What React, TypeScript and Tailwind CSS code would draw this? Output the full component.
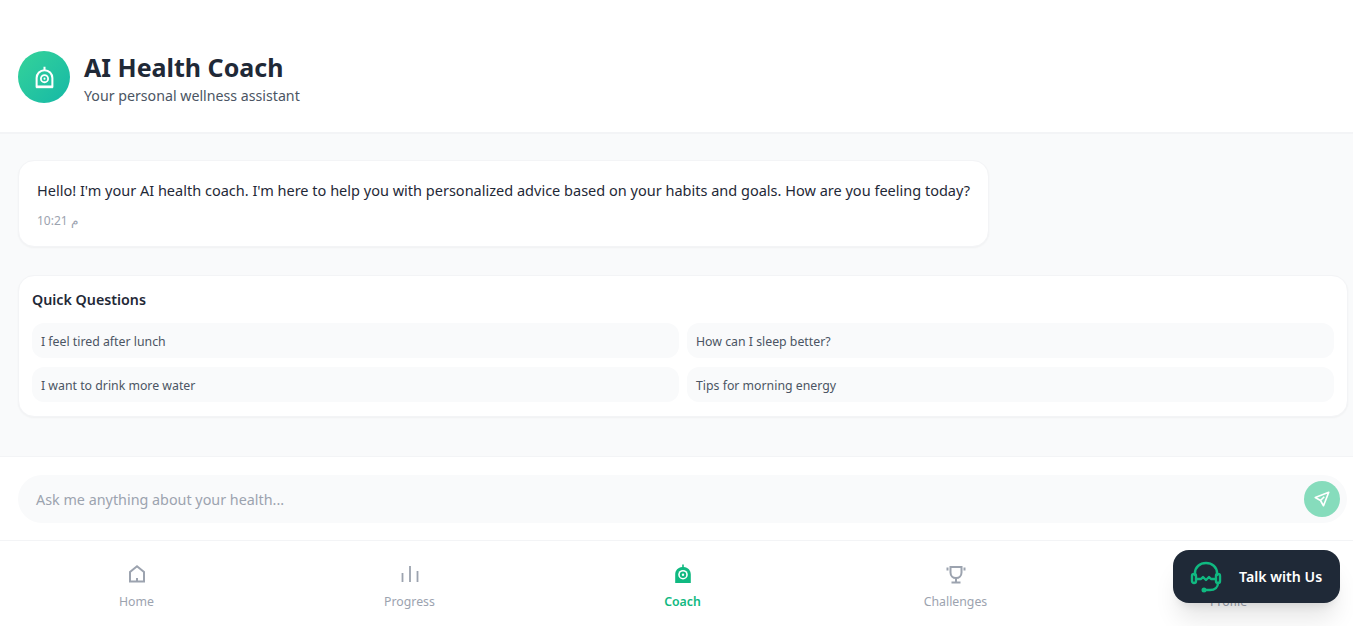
const questions = [
  "I feel tired after lunch",
  "How can I sleep better?",
  "I want to drink more water",
  "Tips for morning energy",
];

function CoachIcon() {
  return (
    <svg viewBox="0 0 24 24" fill="none" stroke="white" className="h-[27px] w-[27px]">
      <path strokeWidth="1.800" d="M12 2.500v3M5 20v-7.500c0-4 3-7 7-7s7 3 7 7V20z" />
      <path strokeWidth="2" d="M4.500 20.500h15" />
      <circle cx="12" cy="13" r="3.200" strokeWidth="1.600" />
      <circle cx="12" cy="13" r="0.900" fill="white" stroke="none" />
    </svg>
  );
}

function CoachIconSolid() {
  return (
    <svg viewBox="0 0 24 24" className="h-6 w-6">
      <path fill="#10b981" d="M11.200 2.500h1.600v2.600c4.200.4 7 3.300 7 7.500v8.400H4.200v-8.400c0-4.200 2.800-7.100 7-7.500z" />
      <circle cx="12" cy="12.700" r="4.800" fill="white" />
      <circle cx="12" cy="12.700" r="3.200" fill="#10b981" />
      <circle cx="12" cy="12.700" r="1.200" fill="white" />
    </svg>
  );
}

function HomeIcon() {
  return (
    <svg viewBox="0 0 24 24" fill="none" stroke="currentColor" strokeWidth="2" className="h-6 w-6">
      <path d="M5 19.500V10l7-5.700L19 10v9.500z" />
      <path d="M12 19.500V16" />
    </svg>
  );
}

function BarsIcon() {
  return (
    <svg viewBox="0 0 24 24" fill="none" stroke="currentColor" strokeWidth="1.800" className="h-6 w-6">
      <path d="M4.500 20v-9M12 20V4M19.500 20V9" />
    </svg>
  );
}

function TrophyIcon() {
  return (
    <svg viewBox="0 0 24 24" fill="none" stroke="currentColor" strokeWidth="2" className="h-6 w-6">
      <path d="M6.500 5h11v5.500c0 3.200-2.300 5.500-5.500 5.500s-5.500-2.300-5.500-5.500z" />
      <path d="M12 16v4M7.500 20.500h9M3.500 5.500v3M20.500 5.500v3" />
    </svg>
  );
}

function Headset() {
  return (
    <svg viewBox="0 0 32 32" fill="none" stroke="#10b981" strokeWidth="2.400" strokeLinecap="round" strokeLinejoin="round" className="h-8 w-8">
      <path d="M5 14v-2C5 6 10 2 16 2s11 4 11 10v2" />
      <rect x="2" y="13" width="4" height="9" rx="2" />
      <rect x="26" y="13" width="4" height="9" rx="2" />
      <path d="M6 18h5l2-2 3 3 3-3 2 2h5" />
      <path d="M28 22c0 4-3 7-8 7h-5" />
      <circle cx="14" cy="29" r="1.300" fill="#10b981" />
    </svg>
  );
}

function NavItem({ label, icon, active }: { label: string; icon: React.ReactNode; active?: boolean }) {
  return (
    <button className={`flex flex-1 flex-col items-center gap-[6px] pt-[6px] ${active ? "font-semibold text-[#10b981]" : "text-[#9ca3af]"}`}>
      {icon}
      <span className="text-[12.300px] leading-[20px]">{label}</span>
    </button>
  );
}

export default function App() {
  return (
    <div className="h-screen overflow-hidden bg-white font-['Noto_Sans',sans-serif]">
      <div className="relative flex h-[626px] w-[1365px] flex-col">
        <header className="flex h-[134px] items-center gap-3.5 border-b-2 border-[#f3f4f6] bg-white px-[18px] pt-[22px]">
          <div className="flex h-[52px] w-[52px] items-center justify-center rounded-full bg-gradient-to-br from-[#34d399] to-[#14b8a6]">
            <CoachIcon />
          </div>
          <div className="pt-[1px]">
            <h1 className="text-[25px] leading-[36px] font-bold text-[#1f2937]">AI Health Coach</h1>
            <p className="mt-[1px] text-[14.200px] leading-[20px] text-[#4b5563]">Your personal wellness assistant</p>
          </div>
        </header>

        <main className="flex h-[323px] flex-col items-start gap-7 border-b border-[#f3f4f6] bg-[#f9fafb] pt-[26px] pr-[17px] pl-[18px]">
          <div className="rounded-2xl border border-[#f3f4f6] bg-white px-[18px] pt-[17px] pb-[15px] shadow-[0_1px_2px_rgba(0,0,0,0.04)]">
            <p className="text-[14.530px] leading-[24px] text-[#1f2937]">
              Hello! I'm your AI health coach. I'm here to help you with personalized advice based on your habits and goals. How are you feeling today?
            </p>
            <p className="mt-[9px] text-xs leading-[20px] text-[#9ca3af]">10:21 م</p>
          </div>

          <section className="w-full rounded-2xl border border-[#f3f4f6] bg-white px-[13px] pt-[13px] pb-[14px] shadow-[0_1px_2px_rgba(0,0,0,0.04)]">
            <h2 className="mb-[12px] text-[14.250px] leading-[22px] font-semibold text-[#1f2937]">Quick Questions</h2>
            <div className="grid grid-cols-2 gap-x-2 gap-y-[9px]">
              {questions.map((q) => (
                <button key={q} className="h-[35px] rounded-xl bg-[#f9fafb] px-[9px] pt-[4px] text-left text-[12.300px] text-[#4b5563]">
                  {q}
                </button>
              ))}
            </div>
          </section>
        </main>

        <div className="h-[84px] border-b border-[#f3f4f6] bg-white px-[18px] pt-[18px]">
          <div className="flex h-[48px] items-center justify-between rounded-full bg-[#f9fafb] pr-[7px] pl-[18px]">
            <span className="pt-[1px] text-[14.350px] text-[#9ca3af]">Ask me anything about your health...</span>
            <div className="flex h-9 w-9 items-center justify-center rounded-full bg-[#86dcbc]">
              <svg viewBox="0 0 24 24" fill="none" stroke="white" strokeWidth="2.200" strokeLinejoin="round" className="h-[18px] w-[18px]">
                <path d="M21 3L3 10l7 4 4 7zM10 14l5-5" />
              </svg>
            </div>
          </div>
        </div>

        <nav className="flex flex-1 items-center bg-white">
          <NavItem label="Home" icon={<HomeIcon />} />
          <NavItem label="Progress" icon={<BarsIcon />} />
          <NavItem label="Coach" active icon={<CoachIconSolid />} />
          <NavItem label="Challenges" icon={<TrophyIcon />} />
          <NavItem label="Profile" icon={<span className="h-6 w-6" />} />
        </nav>

        <button className="absolute top-[550px] left-[1173px] flex h-[53px] w-[167px] items-center gap-[17px] rounded-2xl bg-[#1f2937] pl-[17px] text-[14.200px] font-semibold text-white shadow-xl">
          <Headset />
          Talk with Us
        </button>
      </div>
    </div>
  );
}
